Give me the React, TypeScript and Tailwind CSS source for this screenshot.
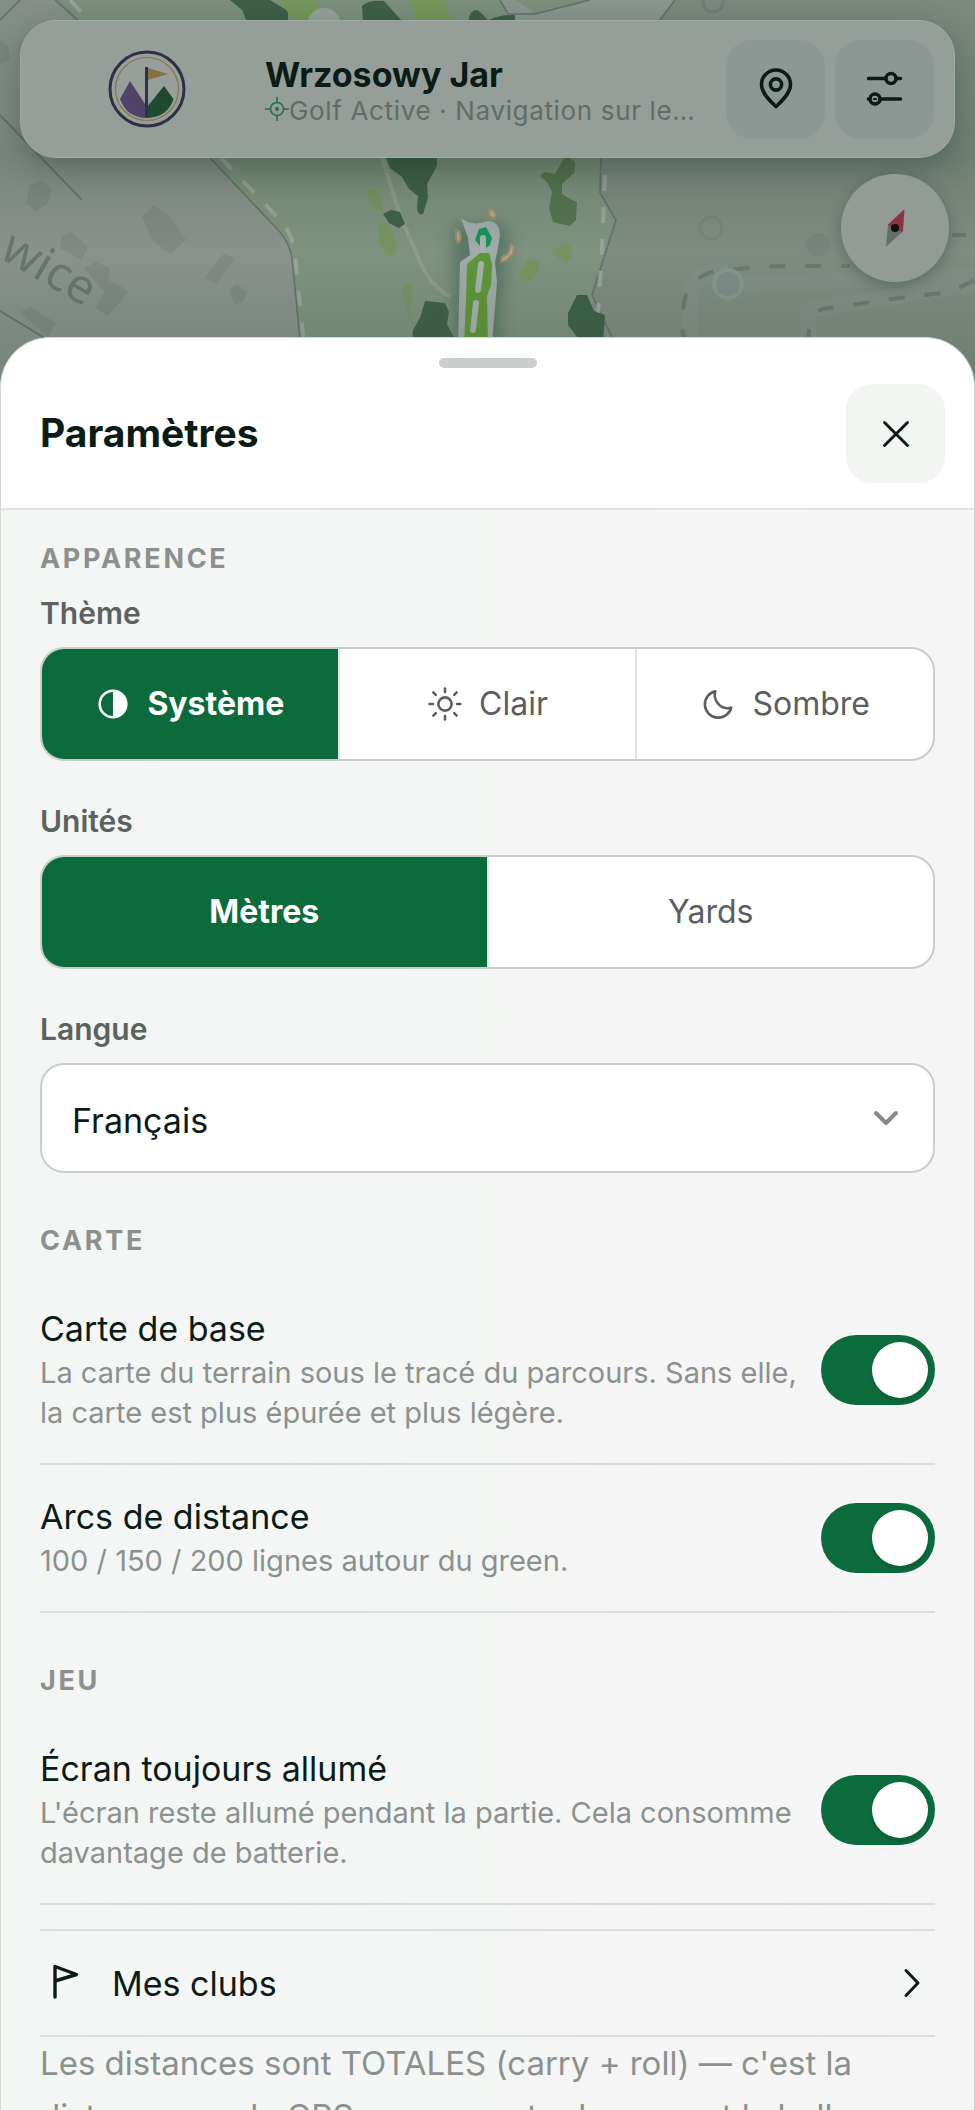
import React, { useState } from 'react';

const themes = [
  { value: 'system', label: 'Système' },
  { value: 'light', label: 'Clair' },
  { value: 'dark', label: 'Sombre' },
];

const units = [
  { value: 'meters', label: 'Mètres' },
  { value: 'yards', label: 'Yards' },
];

const ThemeIcon: React.FC<{ name: string }> = ({ name }) => {
  if (name === 'system') {
    return (
      <svg viewBox="0 0 36 36" className="size-9 shrink-0" aria-hidden="true">
        <circle cx="18" cy="18" r="13.3" fill="none" stroke="currentColor" strokeWidth="2.6" />
        <path d="M18 4.5a13.5 13.5 0 0 1 0 27z" fill="currentColor" />
      </svg>
    );
  }
  if (name === 'light') {
    return (
      <svg viewBox="0 0 36 36" className="size-9 shrink-0" fill="none" stroke="currentColor" strokeWidth="2.6" strokeLinecap="round" aria-hidden="true">
        <circle cx="18" cy="18" r="6.6" />
        <path d="M18 2.6v3.4M18 30v3.4M2.6 18H6M30 18h3.4M6.4 6.4l2.4 2.4M27.2 27.2l2.4 2.4M29.6 6.4l-2.4 2.4M8.8 27.2l-2.4 2.4" />
      </svg>
    );
  }
  return (
    <svg viewBox="0 0 36 36" className="size-9 shrink-0" fill="none" stroke="currentColor" strokeWidth="2.6" strokeLinejoin="round" aria-hidden="true">
      <path d="M15.3 5.2A13.4 13.4 0 1 0 31.2 21.8 13.3 13.3 0 0 1 15.3 5.2z" />
    </svg>
  );
};

const CourseMap: React.FC = () => (
  <svg viewBox="0 0 975 420" preserveAspectRatio="xMidYMin slice" className="absolute inset-x-0 top-0 h-[420px] w-full" aria-hidden="true">
    <defs>
      <linearGradient id="shade" x1="0" y1="0" x2="0" y2="1">
        <stop offset="0" stopColor="#1d3326" stopOpacity="0.03" />
        <stop offset="0.38" stopColor="#1d3326" stopOpacity="0.14" />
        <stop offset="0.6" stopColor="#1d3326" stopOpacity="0" />
        <stop offset="0.85" stopColor="#1d3326" stopOpacity="0.14" />
      </linearGradient>
      <filter id="soft" x="-50%" y="-50%" width="200%" height="200%">
        <feGaussianBlur stdDeviation="7" />
      </filter>
    </defs>
    <rect width="975" height="420" fill="#7e8b81" />
    <path d="M0 0H55L210 158 285 238 294 256 302 420H0z" fill="#89928c" />
    <path d="M60 0H600V158L600 193 616 220 592 295 605 420H302L294 256 285 238 210 158z" fill="#7f917f" />
    <path d="M508 14H535L590 0H675L655 25H515z" fill="#8c9890" />
    <path d="M500 0h16l20 14h-28z" fill="#8c9890" />

    {/* buildings */}
    <g fill="#808983">
      <path d="M30 185l12-4 10 8-4 14-12 8-10-8z" />
      <path d="M142 216l12-10 16 10 16 24-16 14-18-14z" />
      <path d="M62 236l8-4 18 14-6 14-22-12z" />
      <path d="M84 268l12-6 14 6-2 12 12 6 8 6-20 24-12-8 8-16z" />
      <path d="M205 278l18-24 12 4-18 26z" />
      <path d="M229 290l8-6 10 8-4 10-8 2z" />
      <path d="M20 312l10-5 26 16-8 14z" />
      <path d="M0 40l8 6 2 14-10 4z" />
    </g>

    {/* roads and boundaries */}
    <g fill="none" stroke="#66726b" strokeWidth="1.6">
      <path d="M0 20L20 0M55 0L82 24 210 158 280 232Q290 244 292 258L300 340" />
      <path d="M0 115L82 200M0 311L43 337 70 356" />
      <path d="M601 158L600 193 616 220 592 295 612 337" />
      <path d="M500 0L508 14H535L590 0M675 0L660 20" />
    </g>
    <path d="M70 0L90 22M221 158L284 224Q294 240 295 255L304 345" fill="none" stroke="#98a39b" strokeWidth="4" strokeDasharray="16 16" />
    <path d="M605 175L602 250 597 330" fill="none" stroke="#98a39b" strokeWidth="4" strokeDasharray="16 16" />
    <path d="M382 158L400 215 420 262Q430 285 450 297" fill="none" stroke="#8f9c8d" strokeWidth="4" />
    <g fill="none" stroke="#84918a" strokeWidth="16" strokeLinejoin="round" opacity="0.5">
      <path d="M740 284L975 276M690 340V290Q700 270 728 270M808 345V310L975 284" />
    </g>
    <g fill="none" stroke="#6d7971" strokeWidth="4" strokeDasharray="16 20">
      <path d="M686 345Q680 330 683 310 685 280 712 272 760 265 800 266H850" />
      <path d="M808 345Q808 315 822 309L900 298 950 292 975 280" />
      <path d="M952 235h14" />
    </g>
    <circle cx="728" cy="284" r="14" fill="#7d8c87" stroke="#87958f" strokeWidth="4" />
    <circle cx="711" cy="228" r="11" fill="none" stroke="#78847c" strokeWidth="3" />
    <circle cx="818" cy="245" r="12" fill="#79857c" />
    <circle cx="713" cy="2" r="10" fill="none" stroke="#737f78" strokeWidth="3" />

    {/* woods */}
    <g fill="#3f6148">
      <path d="M230 0H270L288 11V22H247L242 10z" />
      <path d="M362 6Q368 0 384 1L403 22H363z" />
      <path d="M469 22Q468 10 478 10L490 22zM485 22Q498 14 515 15V22z" />
      <path d="M385 155H437V166L427 184 428 198 423 214Q418 216 417 208L418 196 409 189 402 177 390 168z" />
      <path d="M383 214L391 210 400 212 405 224 399 228 389 223z" />
      <path d="M425 301L445 303 449 312 447 324 458 345H412L413 330 420 318z" />
      <path d="M577 295H587L594 311 605 315 603 345H583L568 325V313z" />
    </g>
    <path d="M566 155L575 162V172L562 184V194L570 199 577 202 576 220 570 226 553 222 549 208 552 192 547 182 540 176 545 172 555 174z" fill="#56744f" />
    <g fill="#779a5c">
      <path d="M280 0H312L338 22H294z" />
      <path d="M410 0H445L452 22H416z" />
    </g>
    <g fill="#769463">
      <path d="M368 190l8-1 6 10 1 12-8-2-8-10z" />
      <path d="M379 224q8-6 12 8l6 14-2 9h-8l-8-14z" />
      <path d="M402 284h10l1 14-3 8 3 18-6-12z" />
      <path d="M519 274l8-14 12 2v10l-8 8-10 2z" />
      <path d="M551 253l12-10 8 2 1 12-6 7z" />
    </g>
    <circle cx="324" cy="25" r="17" fill="#9aa39d" />

    {/* current hole */}
    <path d="M452 226L504 222 510 240 502 300 500 345H454z" fill="#4f6f5f" filter="url(#soft)" opacity="0.75" />
    <path d="M461 218Q472 227 488 221 500 221 500 236L497 253 495 262 497 282 492 345H458L460 262 470 255 468 238z" fill="#a0aaa9" />
    <path d="M467 264L480 253H489L492 264 491 285 487 296 488 345H464L466 300z" fill="#5f9638" />
    <path d="M475 240L479 229 486 227 492 238 490 245 486 248 481 247z" fill="#14945c" />
    <path d="M483 238V250M481 264L478 290M476 303L473 330" fill="none" stroke="#a6b1ac" strokeWidth="6" strokeLinecap="round" />
    <g fill="#a9a58f" stroke="#9c8865" strokeWidth="2">
      <path d="M456 230l4 2 1 7-3 4-2-4z" />
      <path d="M488 210l5-1 4 6-3 4-5-3z" />
      <path d="M511 244l3 2-1 8-7 7-5 1 1-5 6-3z" />
    </g>

    <text x="-2" y="257" transform="rotate(30 -2 257)" fontFamily="'Noto Sans', sans-serif" fontSize="48" fill="#6b756f" stroke="#8a938d" strokeWidth="5" paintOrder="stroke">wice</text>
    <rect width="975" height="420" fill="url(#shade)" />
  </svg>
);

const ClubLogo: React.FC = () => (
  <svg viewBox="0 0 78 78" className="size-[78px]" role="img" aria-label="Logo du club">
    <circle cx="39" cy="39" r="37" fill="#989f9b" stroke="#2e3046" strokeWidth="3" />
    <circle cx="39" cy="39" r="31.5" fill="none" stroke="#857744" strokeWidth="1.2" />
    <path d="M22 31L39 57V68Q19 68 12 49z" fill="#4f4467" />
    <path d="M56 36L65.5 49Q60 67 39 68V57z" fill="#1d4a30" />
    <path d="M40 18L60 24 40 30z" fill="#84713f" />
    <path d="M38.5 17V67" stroke="#2e3046" strokeWidth="3" />
  </svg>
);

type SegmentedProps = {
  name: string;
  legend: string;
  options: { value: string; label: string }[];
  value: string;
  onChange: (value: string) => void;
  icons?: boolean;
};

const Segmented: React.FC<SegmentedProps> = ({ name, legend, options, value, onChange, icons }) => (
  <fieldset>
    <legend className="mb-4 text-[30px] leading-9 font-semibold text-[#5b625f]">{legend}</legend>
    <div className="flex h-[114px] overflow-hidden rounded-3xl border-2 border-[#cacdcb] bg-white">
      {options.map((option) => (
        <label
          key={option.value}
          className="relative flex flex-1 cursor-pointer items-center justify-center gap-4 border-l-2 border-[#e2e5e3] text-[32px] text-[#5b605e] first:border-l-0 has-checked:bg-[#0c6b3d] has-checked:font-bold has-checked:text-white"
        >
          <input
            type="radio"
            name={name}
            value={option.value}
            checked={value === option.value}
            onChange={() => onChange(option.value)}
            className="sr-only"
          />
          {icons && <ThemeIcon name={option.value} />}
          {option.label}
        </label>
      ))}
    </div>
  </fieldset>
);

type ToggleRowProps = {
  id: string;
  title: string;
  description: string;
};

const ToggleRow: React.FC<ToggleRowProps> = ({ id, title, description }) => {
  const [checked, setChecked] = useState(true);

  return (
    <label htmlFor={id} className="flex cursor-pointer items-center justify-between gap-5 border-b-2 border-[#d9dddb] py-[30px]">
      <span className="flex min-w-0 flex-1 flex-col gap-0.5">
        <span className="text-[34px] leading-[44px]">{title}</span>
        <span className="text-[29px] leading-10 text-[#8c918f]">{description}</span>
      </span>
      <input
        id={id}
        type="checkbox"
        role="switch"
        checked={checked}
        onChange={(e) => setChecked(e.target.checked)}
        className="flex h-[70px] w-[114px] shrink-0 appearance-none items-center rounded-full bg-[#b8bfbb] px-[7px] before:size-14 before:rounded-full before:bg-white before:shadow-md checked:justify-end checked:bg-[#0c6b3d]"
      />
    </label>
  );
};

const SectionTitle: React.FC<{ children: React.ReactNode }> = ({ children }) => (
  <h2 className="mb-4 text-[27px] leading-10 font-bold tracking-widest text-[#8c918e] uppercase">{children}</h2>
);

const App: React.FC = () => {
  const [theme, setTheme] = useState('system');
  const [unit, setUnit] = useState('meters');
  const [language, setLanguage] = useState('fr');

  return (
    <div className="relative flex h-screen flex-col overflow-hidden bg-[#737e77] font-[Inter,'Liberation_Sans',sans-serif] text-[#0b1b15]">
      <CourseMap />

      <div className="relative flex h-[337px] shrink-0 flex-col items-end gap-4 px-5 pt-5">
        <header className="flex h-[138px] w-full items-center rounded-[36px] border border-[#a0a8a4] bg-[#969e9a] pr-5 shadow-[0_10px_30px_rgba(20,40,30,0.3)]">
          <div className="mr-3 ml-5 flex w-[212px] shrink-0 justify-center">
            <ClubLogo />
          </div>
          <div className="min-w-0 flex-1 pt-1">
            <h1 className="truncate text-[34px] leading-10 font-bold">Wrzosowy Jar</h1>
            <p className="flex items-center text-[26px] leading-8 tracking-wide text-[#626c67]">
              <svg viewBox="0 0 24 24" className="mb-1 size-6 shrink-0" fill="none" stroke="#2a6e52" strokeWidth="1.6" aria-hidden="true">
                <circle cx="12" cy="12" r="6.5" />
                <circle cx="12" cy="12" r="2" fill="#2a6e52" stroke="none" />
                <path d="M12 0v6M12 18v6M0 12h6M18 12h6" />
              </svg>
              <span className="truncate">Golf Active · Navigation sur les parcours</span>
            </p>
          </div>
          <div className="ml-5 flex shrink-0 gap-2.5">
            <button type="button" aria-label="Position" className="flex size-[99px] items-center justify-center rounded-[26px] bg-[#8d9894]">
              <svg viewBox="0 0 60 60" className="size-[60px]" fill="none" stroke="currentColor" strokeWidth="3.6" strokeLinejoin="round">
                <path d="M30 47.5C24 42 15.5 34 15.5 25.5a14.5 14.5 0 0 1 29 0C44.5 34 36 42 30 47.5z" />
                <circle cx="30" cy="25.5" r="5.6" />
              </svg>
            </button>
            <button type="button" aria-label="Paramètres" className="flex size-[99px] items-center justify-center rounded-[26px] bg-[#8d9894]">
              <svg viewBox="0 0 60 60" className="size-[60px]" fill="none" stroke="currentColor" strokeWidth="3.6" strokeLinecap="round">
                <path d="M13.5 19.5H30M41 19.5h4.5M13.5 40h1M26 40h19.5" />
                <circle cx="36" cy="19.5" r="5" />
                <circle cx="20" cy="40" r="5" />
                <path d="M19 40h2" strokeWidth="2" />
              </svg>
            </button>
          </div>
        </header>
        <button type="button" aria-label="Boussole" className="mr-1.5 flex size-[108px] items-center justify-center rounded-full bg-[#939b97] shadow-[0_4px_14px_rgba(20,40,30,0.3)]">
          <svg viewBox="0 0 40 40" className="size-10">
            <path d="M29.5 1L13 16.5 13.5 20 26.5 24.5 28 23z" fill="#8e3340" />
            <path d="M11 39L13 17 27 24z" fill="#646d69" />
            <circle cx="20" cy="20" r="4" fill="#0a1510" />
          </svg>
        </button>
      </div>

      <main className="relative flex min-h-0 flex-1 flex-col overflow-hidden rounded-t-[50px] border-x border-t border-[#d3d8d5] bg-white">
        <div className="shrink-0 border-b-2 border-[#e1e5e3] pt-5 pb-[25px]">
          <div className="mx-auto h-2.5 w-[98px] rounded-full bg-[#cacfcc]" />
          <div className="mt-4 flex items-center justify-between pr-[29px] pl-[39px]">
            <h2 className="text-[39px] font-bold">Paramètres</h2>
            <button type="button" aria-label="Fermer" className="flex size-[99px] items-center justify-center rounded-[26px] bg-[#f3f5f3]">
              <svg viewBox="0 0 40 40" className="size-10" fill="none" stroke="currentColor" strokeWidth="3" strokeLinecap="round">
                <path d="M8.5 8.5l23 23M31.5 8.5l-23 23" />
              </svg>
            </button>
          </div>
        </div>

        <div className="min-h-0 flex-1 overflow-y-auto bg-linear-to-r from-[#f3f7f4] to-[#f5f5f5] px-[39px] pt-[29px] [scrollbar-width:none]">
          <section>
            <SectionTitle>Apparence</SectionTitle>
            <div className="flex flex-col gap-[42px]">
              <Segmented name="theme" legend="Thème" options={themes} value={theme} onChange={setTheme} icons />
              <Segmented name="unit" legend="Unités" options={units} value={unit} onChange={setUnit} />
              <div>
                <label htmlFor="language" className="mb-4 block text-[30px] leading-9 font-semibold text-[#5b625f]">
                  Langue
                </label>
                <div className="grid items-center">
                  <select
                    id="language"
                    value={language}
                    onChange={(e) => setLanguage(e.target.value)}
                    className="col-start-1 row-start-1 h-[110px] w-full appearance-none rounded-3xl border-2 border-[#cacdcb] bg-white px-[30px] pt-1 text-[34px]"
                  >
                    <option value="fr">Français</option>
                    <option value="en">English</option>
                    <option value="pl">Polski</option>
                  </select>
                  <svg viewBox="0 0 30 30" className="pointer-events-none col-start-1 row-start-1 mr-[34px] size-[30px] justify-self-end" fill="none" stroke="#858a88" strokeWidth="4" strokeLinecap="round" strokeLinejoin="round" aria-hidden="true">
                    <path d="M5 10l10 10 10-10" />
                  </svg>
                </div>
              </div>
            </div>
          </section>

          <section className="mt-12">
            <SectionTitle>Carte</SectionTitle>
            <ToggleRow
              id="base-map"
              title="Carte de base"
              description="La carte du terrain sous le tracé du parcours. Sans elle, la carte est plus épurée et plus légère."
            />
            <ToggleRow id="arcs" title="Arcs de distance" description="100 / 150 / 200 lignes autour du green." />
          </section>

          <section className="mt-12">
            <SectionTitle>Jeu</SectionTitle>
            <ToggleRow
              id="keep-awake"
              title="Écran toujours allumé"
              description="L'écran reste allumé pendant la partie. Cela consomme davantage de batterie."
            />
            <a href="#clubs" className="mt-6 flex h-[108px] items-center border-y-2 border-[#d9dddb] text-[34px]">
              <svg viewBox="0 0 48 48" className="mr-6 size-12" fill="none" stroke="currentColor" strokeWidth="3.4" strokeLinecap="round" strokeLinejoin="round" aria-hidden="true">
                <path d="M15 38V7.5L36.5 15.5 15 22" />
              </svg>
              <span className="flex-1">Mes clubs</span>
              <svg viewBox="0 0 30 30" className="mr-2 size-[30px]" fill="none" stroke="currentColor" strokeWidth="3" strokeLinecap="round" strokeLinejoin="round" aria-hidden="true">
                <path d="M9 2.5L21 15 9 27.5" />
              </svg>
            </a>
            <p className="text-[33px] leading-[53px] text-[#8c918f]">
              Les distances sont TOTALES (carry + roll) — c'est la distance que le GPS mesure entre le coup et la balle.
            </p>
          </section>
        </div>
      </main>
    </div>
  );
};

export default App;
